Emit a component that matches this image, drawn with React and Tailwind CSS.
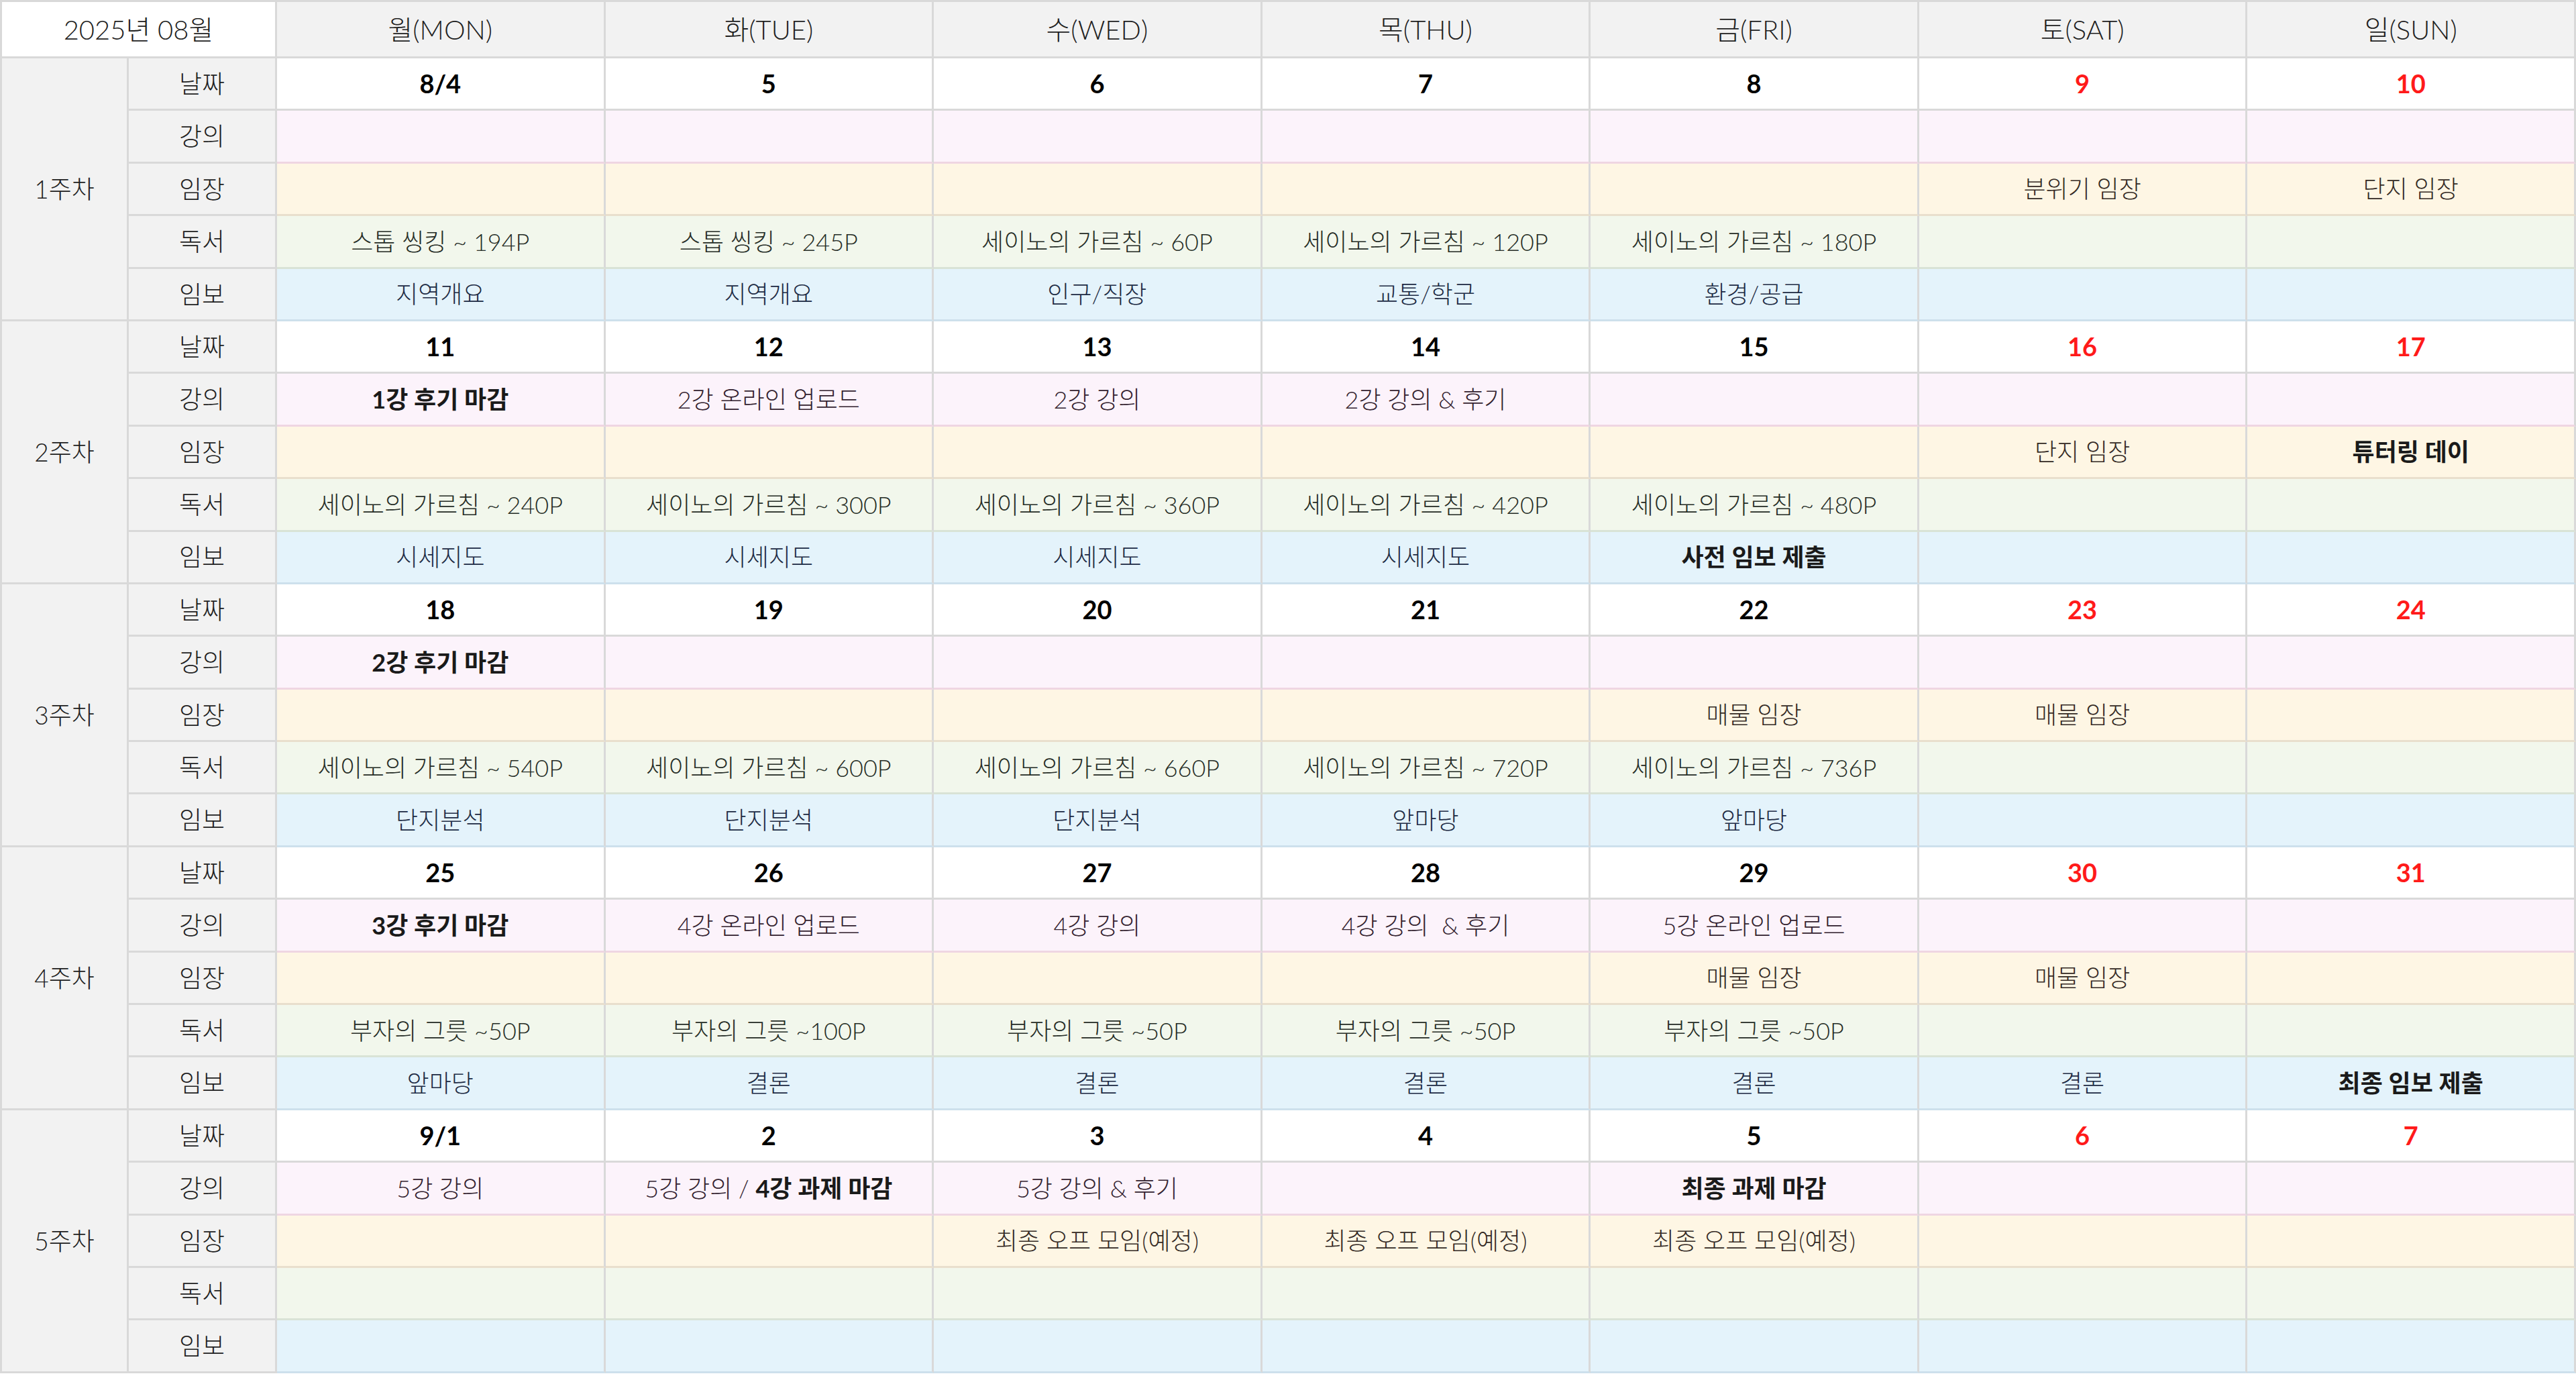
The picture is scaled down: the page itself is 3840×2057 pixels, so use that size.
import React from 'react';

// Row styles per category (background, bottom border, text colour)
const ROW_STYLES = {
  날짜: 'bg-white border-b-[#d9d9d9]',
  강의: 'bg-[#fcf3fb] border-b-[#efd6e2] text-[#33222f]',
  임장: 'bg-[#fef6e4] border-b-[#e9dfcd] text-[#342a24]',
  독서: 'bg-[#f2f7ec] border-b-[#d9e3d6] text-[#262d26]',
  임보: 'bg-[#e4f3fb] border-b-[#cde0ec] text-[#1d2b44]',
};

const LABELS = ['날짜', '강의', '임장', '독서', '임보'];

const DAYS = ['월(MON)', '화(TUE)', '수(WED)', '목(THU)', '금(FRI)', '토(SAT)', '일(SUN)'];

// bold text is marked with a leading "*"
const WEEKS = [
  {
    name: '1주차',
    dates: ['8/4', '5', '6', '7', '8', '9', '10'],
    강의: ['', '', '', '', '', '', ''],
    임장: ['', '', '', '', '', '분위기 임장', '단지 임장'],
    독서: ['스톱 씽킹 ~ 194P', '스톱 씽킹 ~ 245P', '세이노의 가르침 ~ 60P', '세이노의 가르침 ~ 120P', '세이노의 가르침 ~ 180P', '', ''],
    임보: ['지역개요', '지역개요', '인구/직장', '교통/학군', '환경/공급', '', ''],
  },
  {
    name: '2주차',
    dates: ['11', '12', '13', '14', '15', '16', '17'],
    강의: ['*1강 후기 마감', '2강 온라인 업로드', '2강 강의', '2강 강의 & 후기', '', '', ''],
    임장: ['', '', '', '', '', '단지 임장', '*튜터링 데이'],
    독서: ['세이노의 가르침 ~ 240P', '세이노의 가르침 ~ 300P', '세이노의 가르침 ~ 360P', '세이노의 가르침 ~ 420P', '세이노의 가르침 ~ 480P', '', ''],
    임보: ['시세지도', '시세지도', '시세지도', '시세지도', '*사전 임보 제출', '', ''],
  },
  {
    name: '3주차',
    dates: ['18', '19', '20', '21', '22', '23', '24'],
    강의: ['*2강 후기 마감', '', '', '', '', '', ''],
    임장: ['', '', '', '', '매물 임장', '매물 임장', ''],
    독서: ['세이노의 가르침 ~ 540P', '세이노의 가르침 ~ 600P', '세이노의 가르침 ~ 660P', '세이노의 가르침 ~ 720P', '세이노의 가르침 ~ 736P', '', ''],
    임보: ['단지분석', '단지분석', '단지분석', '앞마당', '앞마당', '', ''],
  },
  {
    name: '4주차',
    dates: ['25', '26', '27', '28', '29', '30', '31'],
    강의: ['*3강 후기 마감', '4강 온라인 업로드', '4강 강의', '4강 강의  & 후기', '5강 온라인 업로드', '', ''],
    임장: ['', '', '', '', '매물 임장', '매물 임장', ''],
    독서: ['부자의 그릇 ~50P', '부자의 그릇 ~100P', '부자의 그릇 ~50P', '부자의 그릇 ~50P', '부자의 그릇 ~50P', '', ''],
    임보: ['앞마당', '결론', '결론', '결론', '결론', '결론', '*최종 임보 제출'],
  },
  {
    name: '5주차',
    dates: ['9/1', '2', '3', '4', '5', '6', '7'],
    강의: ['5강 강의', 'MIXED', '5강 강의 & 후기', '', '*최종 과제 마감', '', ''],
    임장: ['', '', '최종 오프 모임(예정)', '최종 오프 모임(예정)', '최종 오프 모임(예정)', '', ''],
    독서: ['', '', '', '', '', '', ''],
    임보: ['', '', '', '', '', '', ''],
  },
];

const CellText = ({ text }) => {
  if (text === 'MIXED') {
    return (
      <span className="whitespace-pre">
        5강 강의 / <span className="font-bold text-[#1a1a1a]">4강 과제 마감</span>
      </span>
    );
  }
  if (text.startsWith('*')) {
    return <span className="font-bold text-[#1a1a1a] whitespace-pre">{text.slice(1)}</span>;
  }
  return <span className="whitespace-pre">{text}</span>;
};

const App = () => {
  return (
    <div className="w-[3840px] h-[2057px] bg-white font-['Lato','Noto_Sans_CJK_KR',sans-serif]">
      <div className="grid grid-cols-[189px_221px_repeat(7,1fr)] grid-rows-[84px_repeat(25,78.4px)] border-t-[3px] border-l-[3px] border-[#d9d9d9]">
        {/* header row */}
        <div className="col-span-2 flex items-center justify-center bg-white border-r-[3px] border-b-[3px] border-[#d9d9d9] text-[40px] font-light text-[#1f1f1f]">
          2025년 08월
        </div>
        {DAYS.map((day) => (
          <div
            key={day}
            className="flex items-center justify-center bg-[#f2f2f2] border-r-[3px] border-b-[3px] border-[#d9d9d9] text-[40px] font-light text-[#1f1f1f]"
          >
            {day}
          </div>
        ))}

        {WEEKS.map((week) => (
          <React.Fragment key={week.name}>
            <div className="row-span-5 flex items-center justify-center bg-[#f2f2f2] border-r-[3px] border-b-[3px] border-[#d9d9d9] text-[37px] font-light text-[#1f1f1f]">
              {week.name}
            </div>
            {LABELS.map((label) => (
              <React.Fragment key={label}>
                <div className="flex items-center justify-center bg-[#f2f2f2] border-r-[3px] border-b-[3px] border-[#d9d9d9] text-[37px] font-light text-[#1f1f1f]">
                  {label}
                </div>
                {label === '날짜'
                  ? week.dates.map((d, i) => (
                      <div
                        key={i}
                        className={`flex items-center justify-center border-r-[3px] border-r-[#d9d9d9] border-b-[3px] ${ROW_STYLES[label]} text-[38px] font-bold ${i >= 5 ? 'text-[#ff1a1a]' : 'text-black'}`}
                      >
                        {d}
                      </div>
                    ))
                  : week[label].map((t, i) => (
                      <div
                        key={i}
                        className={`flex items-center justify-center border-r-[3px] border-r-[#d9d9d9] border-b-[3px] ${ROW_STYLES[label]} text-[36px] font-light`}
                      >
                        <CellText text={t} />
                      </div>
                    ))}
              </React.Fragment>
            ))}
          </React.Fragment>
        ))}
      </div>
    </div>
  );
};

export default App;
